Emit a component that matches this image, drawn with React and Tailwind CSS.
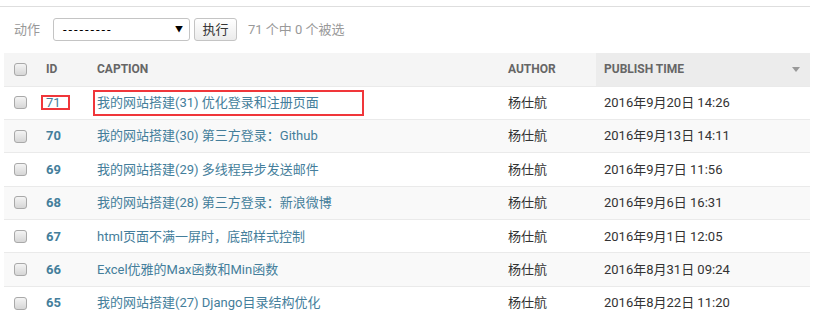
import React from 'react';

const rows = [
  { id: 71, caption: '我的网站搭建(31) 优化登录和注册页面', author: '杨仕航', time: '2016年9月20日 14:26', marked: true },
  { id: 70, caption: '我的网站搭建(30) 第三方登录：Github', author: '杨仕航', time: '2016年9月13日 14:11' },
  { id: 69, caption: '我的网站搭建(29) 多线程异步发送邮件', author: '杨仕航', time: '2016年9月7日 11:56' },
  { id: 68, caption: '我的网站搭建(28) 第三方登录：新浪微博', author: '杨仕航', time: '2016年9月6日 16:31' },
  { id: 67, caption: 'html页面不满一屏时，底部样式控制', author: '杨仕航', time: '2016年9月1日 12:05' },
  { id: 66, caption: 'Excel优雅的Max函数和Min函数', author: '杨仕航', time: '2016年8月31日 09:24' },
  { id: 65, caption: '我的网站搭建(27) Django目录结构优化', author: '杨仕航', time: '2016年8月22日 11:20' },
];

const Box = () => (
  <span className="block w-[13px] h-[13px] rounded-[3px] border border-[#a9a9a9] bg-gradient-to-b from-[#f4f4f4] to-[#d6d6d6]" />
);

export default function App() {
  return (
    <div className="w-[832px] h-[317px] bg-white overflow-hidden pt-[6px] text-[13px] text-[#333] [font-family:Roboto,'Noto_Sans_CJK_SC',sans-serif]">
      <div className="w-[810px] border-t border-[#dedede]" />
      <div className="flex items-center h-[23px] mt-[11px] pl-[14px]">
        <span className="text-[#999] w-[39px]">动作</span>
        <div className="relative w-[137px] h-[23px] border border-[#c4c4c4] rounded-[3px] flex items-center pl-[9px] bg-white">
          <span className="text-black tracking-[1.9px]">---------</span>
          <span className="absolute right-[6px] top-[5px] text-[8px] text-black">▼</span>
        </div>
        <div className="ml-[4px] w-[43px] h-[23px] border border-[#c4c4c4] rounded-[3px] flex items-center justify-center bg-gradient-to-b from-white to-[#ebebeb] text-[#333]">执行</div>
        <span className="ml-[11px] text-[#999]">71 个中 0 个被选</span>
      </div>
      <table className="ml-[4px] mt-[12px] w-[806px] border-collapse table-fixed">
        <colgroup>
          <col className="w-[34px]" />
          <col className="w-[51px]" />
          <col className="w-[411px]" />
          <col className="w-[96px]" />
          <col className="w-[214px]" />
        </colgroup>
        <thead>
          <tr className="h-[33px] bg-[#f5f5f5] text-[12px] font-bold text-[#666] text-left">
            <th className="pl-[10px] border-b border-[#eaeaea]"><Box /></th>
            <th className="pl-[8px] border-b border-[#eaeaea]">ID</th>
            <th className="pl-[8px] border-b border-[#eaeaea]">CAPTION</th>
            <th className="pl-[8px] border-b border-[#eaeaea]">AUTHOR</th>
            <th className="pl-[8px] border-b border-[#eaeaea] bg-[#ececec]">
              <div className="flex items-center justify-between pr-[10px]">
                <span>PUBLISH TIME</span>
                <span className="w-0 h-0 border-l-[4px] border-r-[4px] border-t-[5px] border-l-transparent border-r-transparent border-t-[#999]" />
              </div>
            </th>
          </tr>
        </thead>
        <tbody>
          {rows.map((r, i) => (
            <tr key={r.id} className={`h-[33.4px] ${i % 2 === 1 ? 'bg-[#f9f9f9]' : 'bg-white'}`}>
              <td className="pl-[10px] border-b border-[#eaeaea]"><Box /></td>
              <td className="pl-[8px] border-b border-[#eaeaea]">
                {r.marked ? (
                  <span className="relative inline-block w-[29px] h-[15px] border-2 border-[#f0363a] -ml-[5px] pl-[3px] leading-[11px] text-[#447e9b] font-normal">{r.id}</span>
                ) : (
                  <span className="font-bold text-[#447e9b]">{r.id}</span>
                )}
              </td>
              <td className="pl-[8px] border-b border-[#eaeaea]">
                {r.marked ? (
                  <span className="inline-block w-[271px] h-[26px] border-2 border-[#f0363a] -ml-[4px] pl-[2px] leading-[22px] text-[#447e9b]">{r.caption}</span>
                ) : (
                  <span className="text-[#447e9b]">{r.caption}</span>
                )}
              </td>
              <td className="pl-[8px] border-b border-[#eaeaea] text-[#333]">{r.author}</td>
              <td className="pl-[8px] border-b border-[#eaeaea] text-[#333]">{r.time}</td>
            </tr>
          ))}
        </tbody>
      </table>
    </div>
  );
}
